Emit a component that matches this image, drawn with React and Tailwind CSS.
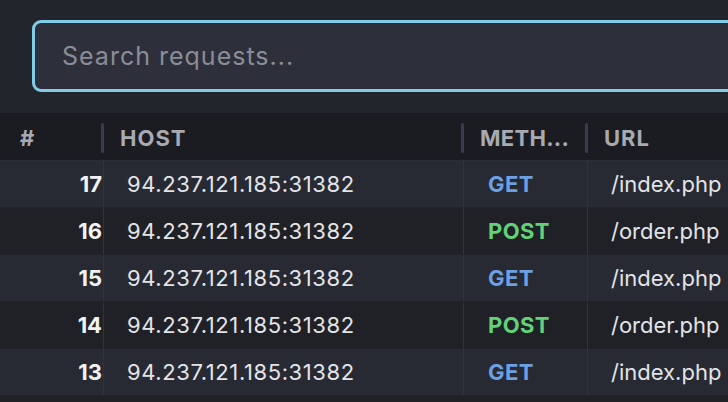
import React from 'react';

const rows = [
  { id: 17, host: '94.237.121.185:31382', method: 'GET', url: '/index.php' },
  { id: 16, host: '94.237.121.185:31382', method: 'POST', url: '/order.php' },
  { id: 15, host: '94.237.121.185:31382', method: 'GET', url: '/index.php' },
  { id: 14, host: '94.237.121.185:31382', method: 'POST', url: '/order.php' },
  { id: 13, host: '94.237.121.185:31382', method: 'GET', url: '/index.php' },
];

function Handle() {
  return <div className="w-[3px] h-[30px] rounded-full bg-[#3a3d52]" />;
}

export default function App() {
  return (
    <div className="w-[728px] h-[402px] overflow-hidden bg-[#1f2127] font-['Inter','Liberation_Sans',sans-serif]">
      {/* search bar */}
      <div className="flex h-[113px] bg-[#23252c]">
        <div className="w-[3px] h-[108px] bg-[#0b0a3c]" />
        <div className="pt-[20px] pl-[32px]">
          <div className="w-[760px] h-[72px] rounded-[9px] border-[3px] border-[#80cdea] bg-[#2d303b] flex items-center pl-[27px] pt-[2px]">
            <span className="text-[25px] text-[#8a8d97] tracking-[1px]">Search requests...</span>
          </div>
        </div>
      </div>

      {/* header */}
      <div className="flex h-[48px] bg-[#1b1c21] border-b border-[#2b2e36] text-[22px] font-bold text-[#a8aab2] tracking-[1px] pt-[3px]">
        <div className="w-[104px] flex items-center justify-between pl-[20px]">
          <span>#</span>
          <Handle />
        </div>
        <div className="w-[360px] flex items-center justify-between pl-[16px]">
          <span>HOST</span>
          <Handle />
        </div>
        <div className="w-[124px] flex items-center justify-between pl-[16px]">
          <span className="tracking-[0.3px]">METH...</span>
          <Handle />
        </div>
        <div className="flex-1 flex items-center pl-[16px]">
          <span>URL</span>
        </div>
      </div>

      {/* rows */}
      {rows.map((r, i) => (
        <div
          key={r.id}
          className={`flex h-[47px] border-b border-[#23252c] ${i % 2 === 0 ? 'bg-[#272a33]' : 'bg-[#1f2127]'}`}
        >
          <div className="w-[104px] flex items-center justify-end pr-[1px] border-r border-[#30333c] text-[22px] font-bold text-[#f2f2f4]">
            {r.id}
          </div>
          <div className="w-[360px] flex items-center pl-[23px] border-r border-[#30333c] text-[22px] tracking-[0.6px] text-[#e3e4e8]">
            {r.host}
          </div>
          <div
            className={`w-[124px] flex items-center pl-[24px] border-r border-[#30333c] text-[22px] font-bold tracking-[0.4px] ${
              r.method === 'GET' ? 'text-[#6d9fe3]' : 'text-[#62d178]'
            }`}
          >
            {r.method}
          </div>
          <div className="flex-1 flex items-center pl-[23px] text-[22px] text-[#e3e4e8] whitespace-nowrap">
            {r.url}
          </div>
        </div>
      ))}
    </div>
  );
}
